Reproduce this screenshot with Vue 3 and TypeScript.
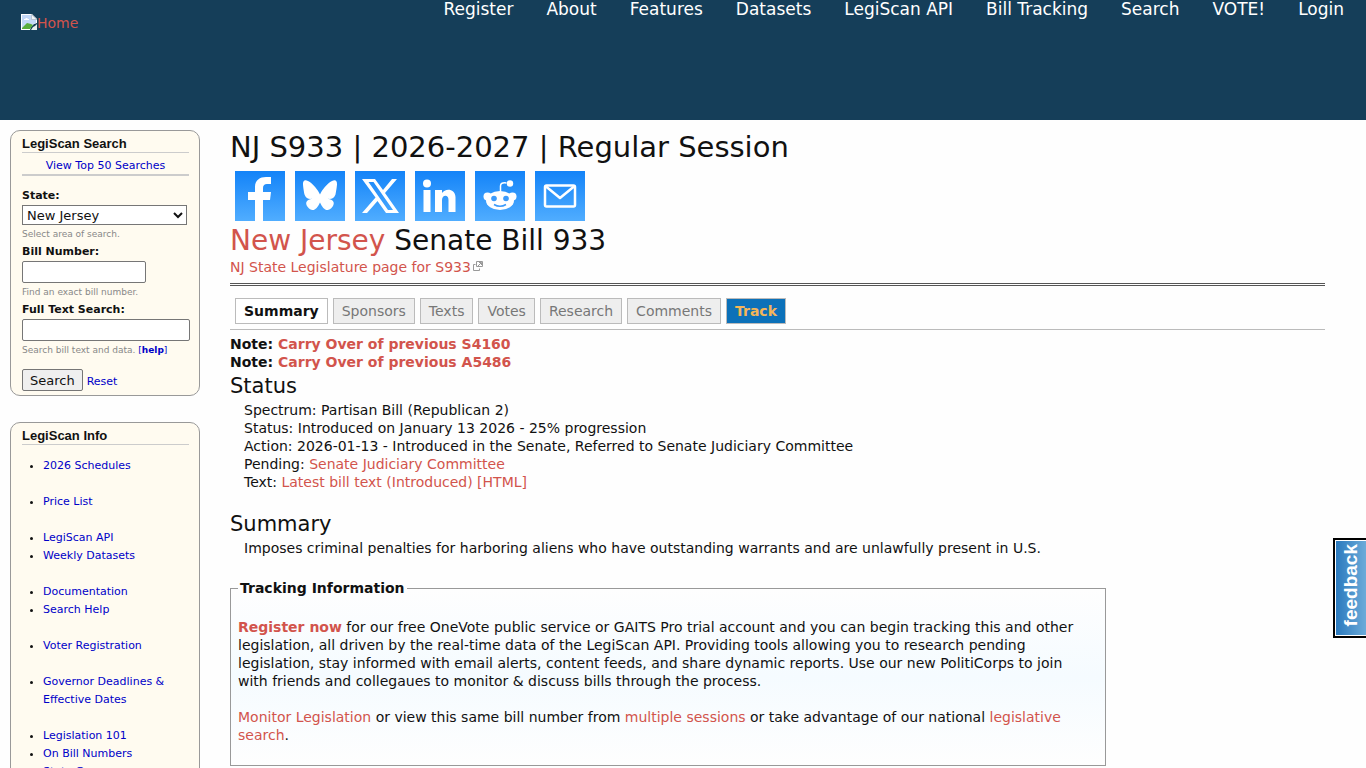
<script setup lang="ts">
import { ref } from 'vue'

interface Tab {
  label: string
  kind?: 'active' | 'track'
}

const nav: string[] = ['Register', 'About', 'Features', 'Datasets', 'LegiScan API', 'Bill Tracking', 'Search', 'VOTE!', 'Login']

const tabs: Tab[] = [
  { label: 'Summary', kind: 'active' },
  { label: 'Sponsors' },
  { label: 'Texts' },
  { label: 'Votes' },
  { label: 'Research' },
  { label: 'Comments' },
  { label: 'Track', kind: 'track' },
]

const infoGroups: string[][] = [
  ['2026 Schedules'],
  ['Price List'],
  ['LegiScan API', 'Weekly Datasets'],
  ['Documentation', 'Search Help'],
  ['Voter Registration'],
  ['Governor Deadlines & Effective Dates'],
  ['Legislation 101', 'On Bill Numbers', 'State Govern'],
]

const state = ref('New Jersey')
const billNumber = ref('')
const fullText = ref('')

function reset(): void {
  state.value = 'New Jersey'
  billNumber.value = ''
  fullText.value = ''
}
</script>

<template>
  <div class="page">
    <header class="top">
      <a href="#" class="home">
        <svg width="16" height="16" viewBox="0 0 16 16" aria-hidden="true">
          <path d="M0 0h11l5 5v4l-3 1-3 3-1 3H0z" fill="#fff" />
          <path d="M1 1h9.500v4.500H15V9l-3 1-3 4H1z" fill="#c3d8f7" />
          <path d="M1 14l5-5 4 1 2 1-3 4H1z" fill="#58ad3c" />
          <path d="M3 6h5V5H7L6 4H5L4 5H3z" fill="#fff" />
          <path d="M10.500 0.500v5H16z" fill="#f4f6f8" stroke="#9caab8" stroke-width=".6" />
          <path d="M16 10v6h-6l2-3 2-1z" fill="#e7f0ee" />
        </svg><span>Home</span>
      </a>
      <nav class="menu">
        <a v-for="item in nav" :key="item" href="#">{{ item }}</a>
      </nav>
    </header>

    <div class="body">
      <aside class="side">
        <section class="block">
          <h2>LegiScan Search</h2>
          <div class="top50"><a href="#">View Top 50 Searches</a></div>
          <form @submit.prevent>
            <label for="state">State:</label>
            <select id="state" v-model="state">
              <option>New Jersey</option>
              <option>New York</option>
              <option>Pennsylvania</option>
            </select>
            <p class="hint">Select area of search.</p>
            <label for="bill">Bill Number:</label>
            <input id="bill" v-model="billNumber" class="short" type="text">
            <p class="hint">Find an exact bill number.</p>
            <label for="full">Full Text Search:</label>
            <input id="full" v-model="fullText" class="long" type="text">
            <p class="hint">Search bill text and data. <a href="#">[<b>help</b>]</a></p>
            <div class="actions">
              <button type="submit">Search</button>
              <a href="#" @click.prevent="reset">Reset</a>
            </div>
          </form>
        </section>

        <section class="block info">
          <h2>LegiScan Info</h2>
          <ul v-for="(group, i) in infoGroups" :key="i">
            <li v-for="item in group" :key="item"><a href="#">{{ item }}</a></li>
          </ul>
        </section>
      </aside>

      <main class="main">
        <h1 class="session">NJ S933 | 2026-2027 | Regular Session</h1>
        <div class="share">
          <a href="#" aria-label="Facebook">
            <svg viewBox="0 0 50 50"><path d="M20 50V29h-7v-8h7v-5C20 9 25 6 31 6h5v7h-4c-2.500 0-4 1.500-4 4v4h8l-1 8h-7v21z" fill="#fff" /></svg>
          </a>
          <a href="#" aria-label="Bluesky">
            <svg viewBox="0 0 50 50"><path d="M25 23.500C23 19 18 12.500 13 10c-3-1.500-5-.8-5 3 0 2 1 8.500 1.500 10.500 1.200 4 4.500 4.800 7.500 4.300-5 1-7.500 3.500-4.500 8 5 6.500 9.500 2.500 12.500-4.300 3 6.800 7.500 10.800 12.500 4.300 3-4.500.5-7-4.500-8 3 .5 6.300-.3 7.500-4.300C41 21.500 42 15 42 13c0-3.800-2-4.500-5-3-5 2.500-10 9-12 13.500z" fill="#fff" /></svg>
          </a>
          <a href="#" aria-label="X">
            <svg viewBox="0 0 50 50"><path fill-rule="evenodd" d="M7 8h13l8 11L37 8h5L30 22l14 20H31l-8.500-12L12 42H7l13.500-15.500zM13.500 11l19.500 28h5L18.500 11z" fill="#fff" /></svg>
          </a>
          <a href="#" aria-label="LinkedIn">
            <svg viewBox="0 0 50 50" fill="#fff"><circle cx="12" cy="12.500" r="4" /><path d="M8.500 19h7v22h-7zM20 19h7v3c3-5 13-5 13.500 4v15h-7V29c0-6-6.500-5-6.500 0v12h-7z" /></svg>
          </a>
          <a href="#" aria-label="Reddit">
            <svg viewBox="0 0 50 50">
              <path d="M25.500 21v-6q0-4 6-3" fill="none" stroke="#fff" stroke-width="1.500" />
              <circle cx="35" cy="12.500" r="3.200" fill="#fff" /><circle cx="12.500" cy="25.500" r="4" fill="#fff" /><circle cx="37.500" cy="25.500" r="4" fill="#fff" />
              <ellipse cx="25" cy="29.500" rx="14" ry="9.500" fill="#fff" />
              <circle cx="19" cy="27.500" r="2.800" fill="#3c9bfb" /><circle cx="31" cy="27.500" r="2.800" fill="#3c9bfb" />
              <path d="M19 33.500q6 3.500 12 0" fill="none" stroke="#3c9bfb" stroke-width="1.500" />
            </svg>
          </a>
          <a href="#" aria-label="Email">
            <svg viewBox="0 0 50 50" fill="none" stroke="#fff" stroke-width="2.500" stroke-linejoin="round"><rect x="10" y="14.500" width="30" height="21" rx="1.500" /><path d="M11 15.500L25 27l14-11.500" /></svg>
          </a>
        </div>
        <h1><a href="#">New Jersey</a> Senate Bill 933</h1>
        <a href="#" class="external">NJ State Legislature page for S933<svg width="12" height="12" viewBox="0 0 12 12" fill="none" stroke="#999"><path d="M3.500 4.500h-2v6h6v-2M4.500 1.500h6v5h-6zM6 6l3-3M7 2.500h2.500V5" /></svg></a>

        <div class="tabs">
          <a v-for="tab in tabs" :key="tab.label" href="#" :class="tab.kind">{{ tab.label }}</a>
        </div>

        <div class="notes">
          <div>Note: <a href="#">Carry Over of previous S4160</a></div>
          <div>Note: <a href="#">Carry Over of previous A5486</a></div>
        </div>

        <h3>Status</h3>
        <div class="details">
          <div>Spectrum: Partisan Bill (Republican 2)</div>
          <div>Status: Introduced on January 13 2026 - 25% progression</div>
          <div>Action: 2026-01-13 - Introduced in the Senate, Referred to Senate Judiciary Committee</div>
          <div>Pending: <a href="#">Senate Judiciary Committee</a></div>
          <div>Text: <a href="#">Latest bill text (Introduced) [HTML]</a></div>
        </div>

        <h3>Summary</h3>
        <div class="details">
          <div>Imposes criminal penalties for harboring aliens who have outstanding warrants and are unlawfully present in U.S.</div>
        </div>

        <fieldset>
          <legend>Tracking Information</legend>
          <p>
            <a href="#"><b>Register now</b></a> for our free OneVote public service or GAITS Pro trial account and you can begin tracking this and other legislation, all driven by the real-time data of the LegiScan API. Providing tools allowing you to research pending legislation, stay informed with email alerts, content feeds, and share dynamic reports. Use our new PolitiCorps to join with friends and collegaues to monitor &amp; discuss bills through the process.
          </p>
          <p>
            <a href="#">Monitor Legislation</a> or view this same bill number from <a href="#">multiple sessions</a> or take advantage of our national <a href="#">legislative search</a>.
          </p>
        </fieldset>
      </main>
    </div>

    <button class="feedback" type="button"><span>feedback</span></button>
  </div>
</template>

<style>
body {
  margin: 0;
  background: #fefefe;
}
</style>

<style scoped>
.page {
  height: 100vh;
  overflow: hidden;
  font: 14px/18px Verdana, "DejaVu Sans", sans-serif;
  color: #111;
}
a {
  color: #d2544c;
  text-decoration: none;
}
.top {
  display: flex;
  justify-content: space-between;
  align-items: flex-start;
  height: 120px;
  background: #153e59;
}
.home {
  display: flex;
  margin: 14px 0 0 21px;
}
.home svg {
  display: block;
}
.menu {
  display: flex;
  gap: 33px;
  margin-right: 22px;
  font-size: 17px;
}
.menu a {
  color: #fff;
}
.body {
  display: flex;
  align-items: flex-start;
  gap: 30px;
  padding: 10px 3% 0 10px;
}
.side {
  flex: 0 0 190px;
  min-width: 0;
  font-size: 11px;
}
.block {
  box-sizing: border-box;
  padding: 4px 10px 4px 11px;
  margin-bottom: 26px;
  border: 1px solid #999;
  border-radius: 10px;
  background: #fffbf0;
}
.side a {
  color: #0000c8;
}
.block h2 {
  margin: 0;
  border-bottom: 1px solid #ccc;
  font: bold 13px/17px "Liberation Sans", Arial, sans-serif;
}
.top50 {
  padding: 4px 0 0;
  border-bottom: 2px solid #ccc;
  line-height: 17px;
  text-align: center;
}
form {
  padding-top: 11px;
}
label {
  display: block;
  line-height: 18px;
  font-weight: bold;
}
select,
input {
  display: block;
  box-sizing: border-box;
  margin: 0;
  border: 1px solid #767676;
  border-radius: 2px;
  background: #fff;
  font: 13px Verdana, "DejaVu Sans", sans-serif;
  color: #111;
}
select {
  width: 165px;
  height: 20px;
  border-radius: 0;
}
.short {
  width: 124px;
  height: 22px;
}
.long {
  width: 168px;
  height: 22px;
}
.hint {
  margin: 0;
  font-size: 9px;
  line-height: 18px;
  color: #888;
  white-space: nowrap;
}
.actions {
  display: flex;
  align-items: baseline;
  gap: 4px;
  margin-top: 10px;
}
button {
  font-family: Verdana, "DejaVu Sans", sans-serif;
}
.actions button {
  height: 22px;
  padding: 0 7px;
  border: 1px solid #767676;
  border-radius: 2px;
  background: #efefef;
  font-size: 13px;
  color: #111;
}
.info {
  padding-bottom: 30px;
}
.info ul {
  margin: 0 0 18px;
  padding: 0 0 0 21px;
}
.info h2 {
  margin-bottom: 12px;
}
.main {
  flex: 1;
  min-width: 0;
}
h1,
h3 {
  margin: 0;
  font-weight: normal;
}
h1 {
  font-size: 28px;
  line-height: 34px;
}
.session {
  font-size: 29px;
}
h3 {
  padding-top: 1px;
  font-size: 21px;
  line-height: 28px;
}
.share {
  display: flex;
  gap: 10px;
  margin: 7px 5px 3px;
}
.share a {
  width: 50px;
  height: 50px;
  background: linear-gradient(#1383f8, #50adff);
}
.share svg {
  display: block;
}
.external {
  display: block;
  padding: 0 0 7px;
  border-bottom: 3px double #555;
}
.external svg {
  margin-left: 1px;
}
.tabs {
  display: flex;
  gap: 5px;
  padding: 12px 5px 5px;
  border-bottom: 1px solid #bbb;
}
.tabs a {
  padding: 3px 8px;
  border: 1px solid #bbb;
  background: #eee;
  color: #777;
}
.tabs .active {
  background: #fff;
  font-weight: bold;
  color: #111;
}
.tabs .track {
  background: #0c71b9;
  font-weight: bold;
  color: #f4b659;
}
.notes {
  padding-top: 5px;
  font-weight: bold;
}
.details {
  padding: 1px 0 18px 14px;
}
fieldset {
  box-sizing: border-box;
  width: 80%;
  margin: 4px 0 0;
  padding: 21px 20px 21px 7px;
  border: 1px solid #999;
  background: linear-gradient(#fefefe, #f5fbff 50%, #fefefe);
}
legend {
  padding: 0 2px;
  font-weight: bold;
}
fieldset p {
  margin: 0;
}
fieldset p + p {
  margin-top: 18px;
}
.feedback {
  position: fixed;
  right: 0;
  top: 538px;
  width: 33px;
  height: 100px;
  padding: 0;
  border: 2px solid #000;
  border-right: 0;
  background: linear-gradient(90deg, #2878bd, #6cabd9);
  box-shadow: inset 1px 1px #fff, inset 0 -1px #fff;
  font: bold 19px "Liberation Sans", Arial, sans-serif;
  color: #fff;
}
.feedback span {
  display: inline-block;
  writing-mode: vertical-rl;
  rotate: 180deg;
}
</style>
